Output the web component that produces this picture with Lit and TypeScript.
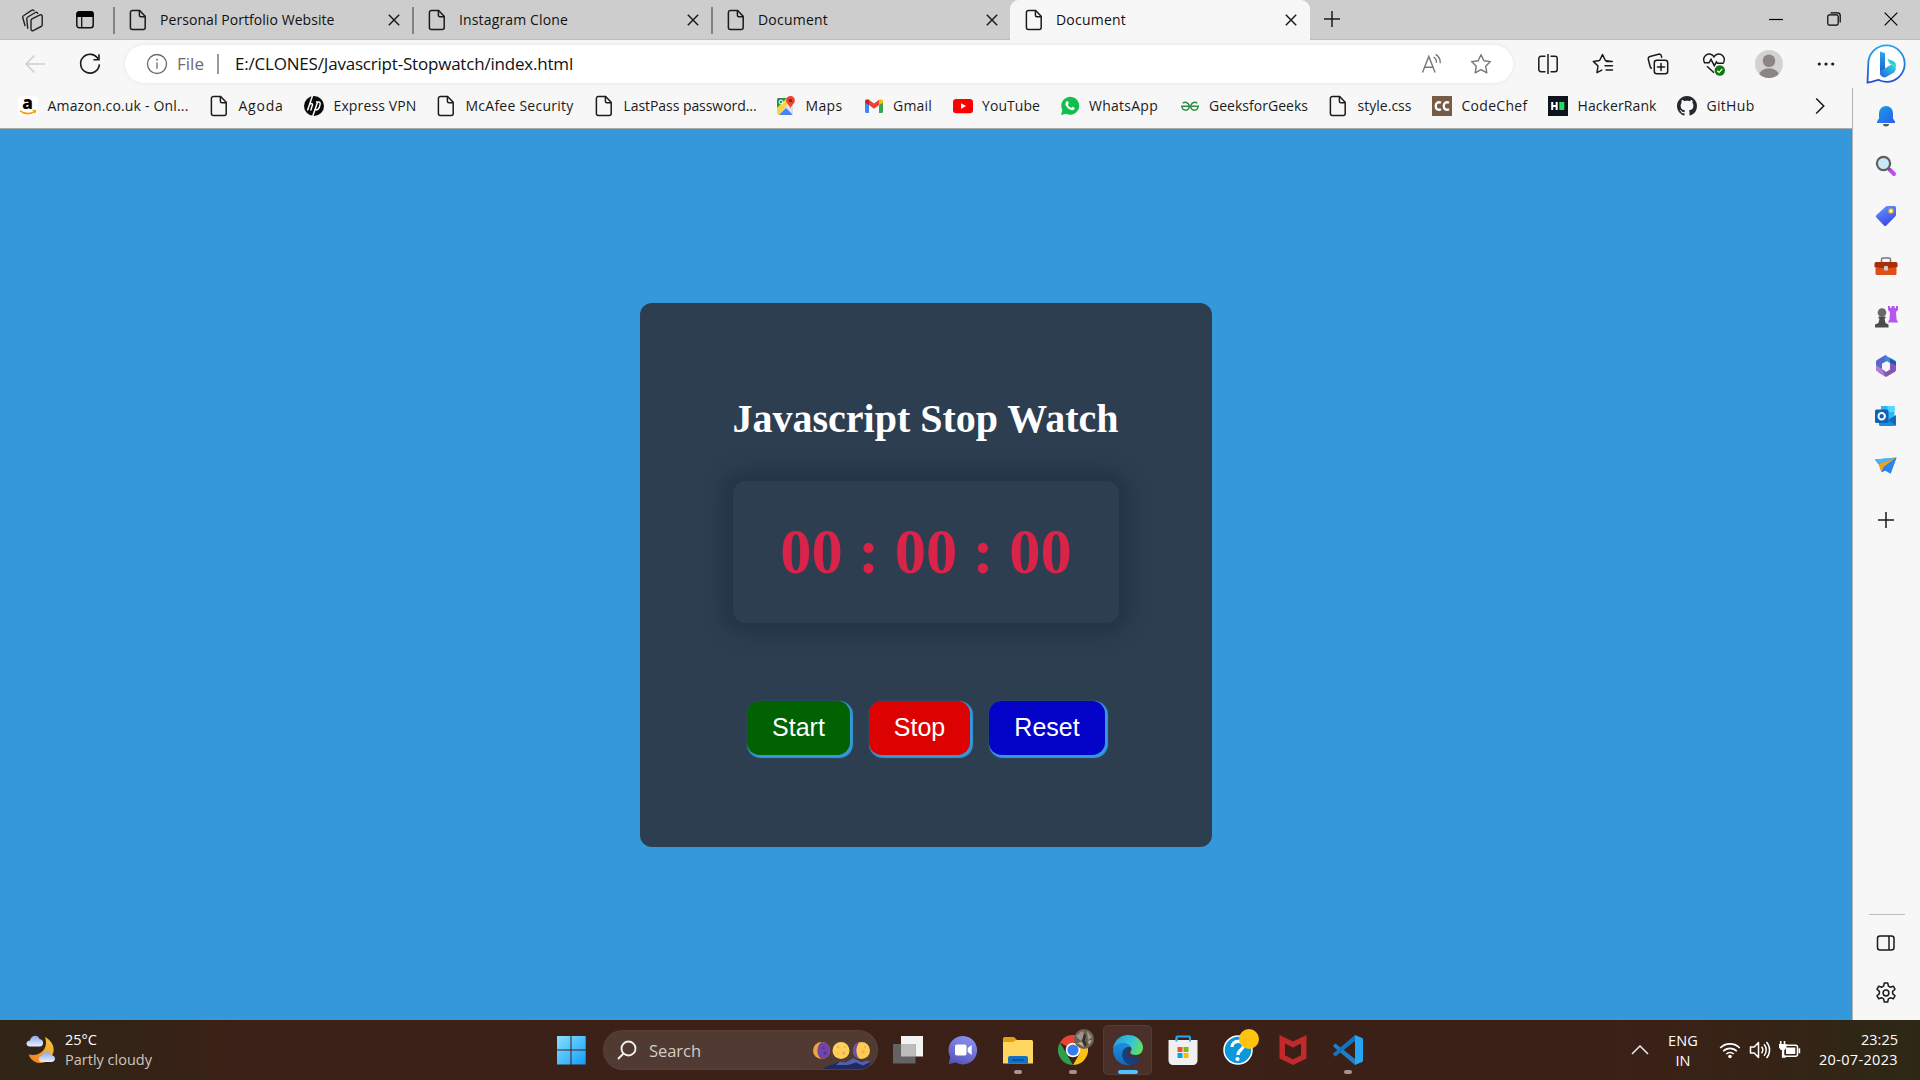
import { LitElement, html, css, TemplateResult } from "lit";
import { customElement } from "lit/decorators.js";

const UI_FONT = '"Open Sans", "Noto Sans", sans-serif';
const ctx = document.createElement("canvas").getContext("2d")!;

/** Letter spacing that makes a label fill the given width. */
function tracking(text: string, size: number, width: number): number {
  ctx.font = `${size}px ${UI_FONT}`;
  return (width - ctx.measureText(text).width) / text.length;
}

function label(text: string, size: number, width: number, cls = "") {
  return html`<span
    class="label ${cls}"
    style="font-size:${size}px;width:${width}px;letter-spacing:${tracking(text, size, width).toFixed(3)}px"
    >${text}</span
  >`;
}

const page = html`<svg width="18" height="22" viewBox="0 0 18 22" fill="none" stroke="#1b1b1b" stroke-width="1.5"><path d="M3.4 1.5h7.2l5.6 5.8v11.2a2 2 0 0 1-2 2H3.4a2 2 0 0 1-2-2v-15a2 2 0 0 1 2-2z"/><path d="M10.4 1.8v4.4a1.5 1.5 0 0 0 1.5 1.5h4"/></svg>`;
const cross = html`<svg width="14" height="14" viewBox="0 0 14 14" stroke="#1b1b1b" stroke-width="1.5"><path d="M1.8 1.8l10.4 10.4M12.2 1.8L1.8 12.2"/></svg>`;

const workspaces = html`<svg width="24" height="24" viewBox="0 0 24 24" fill="#cdcdcd" stroke="#222" stroke-width="1.4" stroke-linejoin="round" stroke-linecap="round"><path d="M4 17.500L1.800 9.800a2 2 0 0 1 1-2.300L10.600 2.300a1.800 1.800 0 0 1 2.400.3" fill="none"/><path d="M6.700 20.300L5.800 11a2 2 0 0 1 1-2l7.600-4.500a1.600 1.600 0 0 1 2.300.9" fill="none"/><path d="M10 12.600a2 2 0 0 1 1-1.700l8-4a1.500 1.500 0 0 1 2.200 1.300v8.500a2 2 0 0 1-1.100 1.800l-7.900 4.100a1.500 1.500 0 0 1-2.200-1.300z"/></svg>`;
const tabActions = html`<svg width="20" height="20" viewBox="0 0 20 20"><rect x="1.800" y="1.800" width="16.400" height="16" rx="2.500" fill="none" stroke="#111" stroke-width="1.500"/><path d="M1.500 7V4a2.800 2.800 0 0 1 2.800-2.800h11.400A2.800 2.800 0 0 1 18.500 4v3z" fill="#000"/><path d="M6.700 7v11" stroke="#111" stroke-width="1.300"/></svg>`;

const back = html`<svg width="22" height="20" viewBox="0 0 22 20" fill="none" stroke="#d0d0d0" stroke-width="1.500"><path d="M21 10H2M10.500 1.500L2 10l8.500 8.500"/></svg>`;
const reload = html`<svg width="24" height="24" viewBox="0 0 24 24" fill="none" stroke="#1b1b1b" stroke-width="1.600"><path d="M20.300 7.200A9.400 9.400 0 1 0 21.400 12.400"/><path d="M21 2.200v5.600h-5.600"/></svg>`;
const info = html`<svg width="22" height="22" viewBox="0 0 22 22" fill="none" stroke="#6b6b6b" stroke-width="1.300"><circle cx="11" cy="11" r="9.500"/><path d="M11 9.500v6.300"/><circle cx="11" cy="6.700" r=".6" fill="#6b6b6b" stroke-width=".8"/></svg>`;
const readAloud = html`<svg width="22" height="22" viewBox="0 0 22 22" fill="none" stroke="#767676" stroke-width="1.400"><path d="M1.500 19.500L7.800 3.500l6.300 16M3.600 14.200h8.400"/><path d="M12.600 4a6 6 0 0 1 2.800 5.600M14.600 1.300a9.500 9.500 0 0 1 4.600 8.800"/></svg>`;
const star = html`<svg width="22" height="22" viewBox="0 0 22 22" fill="none" stroke="#767676" stroke-width="1.400" stroke-linejoin="round"><path d="M11 1.700l2.900 6 6.500.9-4.700 4.600 1.100 6.600-5.800-3.100-5.800 3.100 1.100-6.600L1.600 8.600l6.500-.9z"/></svg>`;

const toolbarIcons: TemplateResult[] = [
  html`<svg width="22" height="22" viewBox="0 0 22 22" fill="none" stroke="#1b1b1b" stroke-width="1.500"><path d="M8.500 3.300H4a2.200 2.200 0 0 0-2.200 2.200v11A2.200 2.200 0 0 0 4 18.700h4.500M13.500 3.300H18a2.200 2.200 0 0 1 2.200 2.200v11a2.200 2.200 0 0 1-2.200 2.200h-4.500M11 1v20"/></svg>`,
  html`<svg width="22" height="22" viewBox="0 0 22 22" fill="none" stroke="#1b1b1b" stroke-width="1.500" stroke-linejoin="round" stroke-linecap="round"><path d="M19.500 8.400l-6.100-.9-2.900-5.900-2.900 5.900-6.300.9L6 13l-1 6.700 4.800-2.600M14.300 8.500h6M13 12.700h7.500M14 17h6.500"/></svg>`,
  html`<svg width="22" height="22" viewBox="0 0 22 22" fill="none" stroke="#1b1b1b" stroke-width="1.500" stroke-linecap="round"><rect x="7.300" y="7.300" width="13.400" height="13.400" rx="2.500"/><path d="M14 10.500v7M10.500 14h7M4.400 15.300A4 4 0 0 1 3 13L1.300 6.200a2.300 2.300 0 0 1 1.700-2.800l8.500-2.200a2.300 2.300 0 0 1 2.800 1.700l.4 1.300"/></svg>`,
  html`<svg width="24" height="24" viewBox="0 0 24 24" fill="none" stroke="#1b1b1b" stroke-width="1.500"><path d="M2.400 10.500a5.300 5.300 0 0 1 9.600-5.700 5.300 5.300 0 0 1 9.600 5.700M2 10.800h5l2-3.500 3.300 6.300 2.200-3.800 1 1.500h6.300M5 14.300l7 6.500"/><circle cx="17.800" cy="18.500" r="5.200" fill="#0e7a0d" stroke="none"/><path d="M15.300 18.700l1.800 1.700 3.200-3.600" stroke="#fff" stroke-width="1.200"/></svg>`,
  html`<svg width="28" height="28" viewBox="0 0 28 28"><defs><clipPath id="avatar-clip"><circle cx="14" cy="14" r="14"/></clipPath></defs><g clip-path="url(#avatar-clip)"><path d="M0 0h28v28H0z" fill="#d4d2d0"/><circle cx="14" cy="10.700" r="6.300" fill="#8b8683"/><ellipse cx="14" cy="25.500" rx="10" ry="7.200" fill="#8b8683"/></g></svg>`,
  html`<svg width="18" height="6" viewBox="0 0 18 6" fill="#1b1b1b"><circle cx="2.300" cy="3" r="1.600"/><circle cx="9" cy="3" r="1.600"/><circle cx="15.700" cy="3" r="1.600"/></svg>`,
];

const icoAmazon = html`<svg class="spill" width="20" height="20" viewBox="0 0 20 20"><rect width="20" height="20" rx="3" fill="#fff"/><text x="9.500" y="13" text-anchor="middle" font-family="Open Sans" font-weight="800" font-size="17" fill="#000">a</text><path d="M2 14.800c5 3.600 10.500 3.500 15 .6" fill="none" stroke="#f90" stroke-width="1.600"/><path d="M14.500 14.200l3.200.2-.8 3" fill="none" stroke="#f90" stroke-width="1.100"/></svg>`;
const icoHp = html`<svg width="20" height="20" viewBox="0 0 20 20"><circle cx="10" cy="10" r="10" fill="#0a0a0a"/><path d="M8.400 0L3.500 14.500M5 10c1-3.500 4.200-3 3.300-.4L6.700 14.500M13.600 6l-4.800 14M12 6h2.600c2.600 0 1.300 3.600.6 5.500s-1.200 2.500-3.600 2.500" fill="none" stroke="#fff" stroke-width="1.500"/></svg>`;
const icoMaps = html`<svg width="20" height="20" viewBox="0 0 20 20"><defs><clipPath id="map-clip"><rect x="1" y="2" width="16" height="17" rx="2"/></clipPath></defs><g clip-path="url(#map-clip)"><path d="M0 0h20v20H0z" fill="#dfe1e5"/><path d="M0 0h14L1 17z" fill="#1fa463"/><path d="M0 13L12 1l4 2L2 20z" fill="#fcd43c"/><path d="M2 20l8-8 8 8z" fill="#4285f4"/><path d="M0 0h10L1 11z" fill="#2b8e55"/></g><circle cx="5" cy="6" r="1.900" fill="none" stroke="#fff"/><path d="M14.500 0a4.400 4.400 0 0 1 4.400 4.500c0 3-3.600 4.500-4.400 8-.8-3.500-4.400-5-4.400-8A4.400 4.400 0 0 1 14.500 0z" fill="#ea4335"/><circle cx="14.500" cy="4.500" r="1.600" fill="#8e1a14"/></svg>`;
const icoGmail = html`<svg width="20" height="20" viewBox="0 0 20 20"><path d="M1 6v9.500A1.500 1.500 0 0 0 2.500 17H5V8z" fill="#4285f4"/><path d="M19 6v9.500a1.500 1.500 0 0 1-1.500 1.500H15V8z" fill="#34a853"/><path d="M1 5.500C1 3.300 3.500 2.500 5 3.700V9L1 6.800z" fill="#c5221f"/><path d="M19 5.500c0-2.200-2.500-3-4-1.800V9l4-2.200z" fill="#fbbc04"/><path d="M5 3.700l5 3.800 5-3.800V9l-5 3.800L5 9z" fill="#ea4335"/></svg>`;
const icoYoutube = html`<svg width="20" height="20" viewBox="0 0 20 20"><rect y="3" width="20" height="14.200" rx="3.200" fill="#f00"/><path d="M8 7.300v5.600l5-2.800z" fill="#fff"/></svg>`;
const icoWhatsapp = html`<svg width="20" height="20" viewBox="0 0 20 20"><path d="M1 19l1.400-4.800A9 9 0 1 1 6 17.700z" fill="#12bf4c"/><path d="M6.600 5.400c.5-.5 1.200-.4 1.400.1l.8 1.800-.9 1.400c.7 1.500 1.800 2.500 3.300 3.200l1.200-1.200 2 1c.5.300.3 1-.2 1.600-1 1-2.500 1.100-4.200.3a10 10 0 0 1-4.300-4.300c-.7-1.600-.3-3 .9-3.900z" fill="#fff"/></svg>`;
const icoGfg = html`<svg width="20" height="20" viewBox="0 0 20 20" fill="none" stroke="#2f8d46" stroke-width="1.500"><path d="M2.800 7.300c2-1.900 5.200-.9 6.200 1.700.9 2.500-.8 5.200-3.300 5.200-2 0-3.600-1.500-3.700-3.900M1 10.300h18M17.200 7.300c-2-1.900-5.200-.9-6.200 1.700-.9 2.500.8 5.200 3.300 5.200 2 0 3.600-1.500 3.700-3.900"/></svg>`;
const icoCodechef = html`<svg width="20" height="20" viewBox="0 0 20 20"><path d="M0 0h20v20H0z" fill="#775c47"/><path d="M9 6.800C6 5.300 3.700 7 3.700 10s2.300 4.700 5.300 3.200M17 6.800c-3-1.500-5.300.2-5.300 3.200s2.300 4.700 5.300 3.200" fill="none" stroke="#fff" stroke-width="2.300"/></svg>`;
const icoHacker = html`<svg width="20" height="20" viewBox="0 0 20 20"><path d="M0 0h20v20H0z" fill="#0e141e"/><path d="M4.200 6v8M8.700 6v8M4.200 10h4.500" stroke="#fff" stroke-width="2"/><path d="M11.300 6h5v8h-5z" fill="#1fe05b"/></svg>`;
const icoGithub = html`<svg width="20" height="20" viewBox="0 0 16 16" fill="#24292f"><path d="M8 0C3.580 0 0 3.580 0 8c0 3.540 2.290 6.530 5.470 7.590.4.070.55-.17.55-.38 0-.19-.01-.82-.01-1.490-2.010.37-2.530-.49-2.690-.94-.09-.23-.48-.94-.82-1.130-.28-.15-.68-.52-.01-.53.63-.01 1.080.58 1.230.82.72 1.210 1.870.87 2.330.66.070-.52.28-.87.51-1.070-1.780-.2-3.640-.89-3.640-3.950 0-.87.31-1.590.82-2.150-.08-.2-.36-1.020.08-2.120 0 0 .67-.21 2.200.82.64-.18 1.320-.27 2-.27s1.360.09 2 .27c1.530-1.040 2.200-.82 2.200-.82.44 1.100.16 1.920.08 2.120.51.56.82 1.270.82 2.150 0 3.070-1.870 3.750-3.650 3.950.29.25.54.73.54 1.480 0 1.070-.01 1.930-.01 2.200 0 .21.15.46.55.38A8.010 8.010 0 0 0 16 8c0-4.420-3.580-8-8-8z"/></svg>`;

interface Bookmark { icon: TemplateResult; text: string; width: number; slot: number }
const bookmarks: Bookmark[] = [
  { icon: icoAmazon, text: "Amazon.co.uk - Onl...", width: 141, slot: 191 },
  { icon: page, text: "Agoda", width: 45, slot: 95 },
  { icon: icoHp, text: "Express VPN", width: 83, slot: 132 },
  { icon: page, text: "McAfee Security", width: 108, slot: 158 },
  { icon: page, text: "LastPass password...", width: 133, slot: 182 },
  { icon: icoMaps, text: "Maps", width: 37, slot: 87.500 },
  { icon: icoGmail, text: "Gmail", width: 39, slot: 89 },
  { icon: icoYoutube, text: "YouTube", width: 58, slot: 107 },
  { icon: icoWhatsapp, text: "WhatsApp", width: 69, slot: 120 },
  { icon: icoGfg, text: "GeeksforGeeks", width: 99, slot: 148.500 },
  { icon: page, text: "style.css", width: 54, slot: 104 },
  { icon: icoCodechef, text: "CodeChef", width: 66, slot: 116 },
  { icon: icoHacker, text: "HackerRank", width: 79, slot: 129 },
  { icon: icoGithub, text: "GitHub", width: 48, slot: 100 },
];

const bing = html`<svg width="42" height="42" viewBox="0 0 42 42"><defs><linearGradient id="bing-ring" x1="0" y1="0" x2="0" y2="1"><stop offset="0" stop-color="#22a7ee"/><stop offset="1" stop-color="#2252cf"/></linearGradient><linearGradient id="bing-a" x1="0" y1="0" x2="0" y2="1"><stop offset="0" stop-color="#2aa9f0"/><stop offset="1" stop-color="#1a52cd"/></linearGradient><linearGradient id="bing-b" x1="0" y1="1" x2="1" y2="0"><stop offset="0" stop-color="#1d5fe0"/><stop offset="1" stop-color="#37dfe0"/></linearGradient></defs><path d="M2.500 39.700l.8-19.200A18.200 18.200 0 1 1 21.400 38.800c-3 0-5.600-.7-8-2-3 .9-6.500 2.200-10.900 2.900z" fill="#fff" stroke="url(#bing-ring)" stroke-width="1.800"/><path d="M15 8.500l5 1.800v15.900l-5 5.600z" fill="url(#bing-a)"/><path d="M15 28.500l12-7.500 3.500 2.800c1 3.200-.5 5-2.300 6.100l-7.200 4.200c-2.700 1.400-6-1-6-4z" fill="url(#bing-b)"/><path d="M22.300 15.800l6 2.300c2 .9 3.200 3.100 2.500 6.300-1-1.800-2.400-2.600-4.300-3.100l-2.200-1z" fill="#2bd0df"/></svg>`;

const sideIcons: TemplateResult[] = [
  html`<svg width="22" height="22" viewBox="0 0 22 22"><defs><linearGradient id="bell-fill" x1="0" y1="0" x2="1" y2="1"><stop stop-color="#10a4df"/><stop offset="1" stop-color="#3159f5"/></linearGradient></defs><path d="M8 19h6a3 2.500 0 0 1-6 0z" fill="#5b5b5b"/><path d="M11 1a7 7 0 0 1 7 7v5.500l2 3V18H2v-1.500l2-3V8a7 7 0 0 1 7-7z" fill="url(#bell-fill)"/></svg>`,
  html`<svg width="22" height="22" viewBox="0 0 22 22"><path d="M14.500 14.500l4.500 4.500" stroke="#c04df5" stroke-width="4" stroke-linecap="round"/><path d="M12.500 12.500l2.500 2.500" stroke="#6a6a6a" stroke-width="2.500"/><circle cx="8.500" cy="8.500" r="6.600" fill="#c8e7f8" stroke="#5f5f5f" stroke-width="2.200"/></svg>`,
  html`<svg width="22" height="22" viewBox="0 0 22 22"><defs><linearGradient id="tag-fill" x1="0" y1="0" x2=".5" y2="1"><stop stop-color="#5fa0ff"/><stop offset="1" stop-color="#4148e8"/></linearGradient></defs><path d="M12.300 1h7.200A1.700 1.700 0 0 1 21 2.700v7.100a2 2 0 0 1-.6 1.400l-9 9.200a1.700 1.700 0 0 1-2.400 0L1.300 12.600a1.700 1.700 0 0 1 0-2.400l9.500-8.600a2 2 0 0 1 1.500-.6z" fill="url(#tag-fill)"/><circle cx="16" cy="6" r="2" fill="#fff" stroke="#f3bd22" stroke-width="1.500"/></svg>`,
  html`<svg width="24" height="22" viewBox="0 0 24 22"><path d="M7.500 8V4.500A1.500 1.500 0 0 1 9 3h6a1.500 1.500 0 0 1 1.500 1.500V8" fill="none" stroke="#777" stroke-width="1.500"/><path d="M1.500 11h21v7.500a1.500 1.500 0 0 1-1.500 1.500H3a1.500 1.500 0 0 1-1.500-1.500z" fill="#dc501c"/><path d="M2 7h20a1.500 1.500 0 0 1 1.500 1.500V12q-11.500 2-23 0V8.500A1.500 1.500 0 0 1 2 7z" fill="#a82f09"/><rect x="10" y="11" width="4" height="4.500" rx="1" fill="#cfcfcf"/></svg>`,
  html`<svg width="24" height="24" viewBox="0 0 24 24"><path d="M14 2h2v2h1.500V2h3v2H22V2h2v4l-2 2 .5 7 1.500 3.500H14L15.500 15 16 8l-2-2z" fill="#b556f0"/><circle cx="8" cy="8.500" r="4.300" fill="#696969"/><path d="M4.500 12.500h7v2h-1l1 4.500 3 1.500V23.500H1V20.500L4.500 19l1-4.500h-1z" fill="#4c4c4c"/></svg>`,
  html`<svg width="22" height="24" viewBox="0 0 22 24"><path d="M9.500 1.500L2 6a2 2 0 0 0-1 1.800v8.500l6 3.200V10l7-4-2.500-4.500a2 2 0 0 0-2 0z" fill="#5867c9"/><path d="M10 1.300l9.800 5A2 2 0 0 1 21 8v8l-6-3V9l-5-3z" fill="#2e91db"/><path d="M21 11v5a2 2 0 0 1-1 1.800l-8 4.700a2 2 0 0 1-2 0L3 18l4-3 4 3 4-2.500V8z" fill="#8358b5"/><path d="M1 11v5.500L10 22l-3-7z" fill="#b37bdc"/><path d="M15 8.500l6 3V8l-6-3.500z" fill="#2452ad"/><path d="M11 7.500l4 2.300v4.500l-4 2.300-4-2.300V9.800z" fill="#f7f7f7"/></svg>`,
  html`<svg width="22" height="22" viewBox="0 0 22 22"><path d="M6 1h13.500v13H6z" fill="#30b6f0"/><path d="M12.500 1h7v6h-7z" fill="#53d8ff"/><path d="M4 12l9 3 8-5v9.500a1.500 1.500 0 0 1-1.500 1.500h-14A1.500 1.500 0 0 1 4 19.500z" fill="#1a8be0"/><path d="M20.900 10.500v10L13 15z" fill="#1767b4"/><rect y="4.500" width="13.500" height="13.500" rx="1.500" fill="#0f62b5"/><circle cx="6.700" cy="11.200" r="3.200" fill="none" stroke="#fff" stroke-width="2"/></svg>`,
  html`<svg width="24" height="22" viewBox="0 0 24 22"><path d="M.8 4.400L22.500 2.500 16.500 18.800l-5-3-4 1.500-2.500-7.500z" fill="#2388e8"/><path d="M.8 4.400L22.500 2.500 5.500 8.800z" fill="#4cb7f5"/><path d="M22.500 2.500L4.700 9l2.800 8.300 2-5z" fill="#f0a21c"/><path d="M22.500 2.500L9.600 12l7 6.600z" fill="#2b83ec"/></svg>`,
];
const plus = (c: string) => html`<svg width="18" height="18" viewBox="0 0 18 18" stroke=${c} stroke-width="1.500"><path d="M9 1v16M1 9h16"/></svg>`;
const panel = html`<svg width="20" height="18" viewBox="0 0 20 18" fill="none" stroke="#1b1b1b" stroke-width="1.500"><rect x="1.500" y="2" width="16.500" height="14" rx="2.500"/><path d="M13 2v14"/></svg>`;
const gear = html`<svg width="24" height="24" viewBox="0 0 24 24" fill="none" stroke="#1b1b1b" stroke-width="1.500" stroke-linejoin="round"><circle cx="12" cy="12" r="2.900"/><path d="M10.300 2h3.400l.7 3.200 1.800 1 3.100-1 1.700 3-2.400 2.200v2.200l2.400 2.200-1.700 3-3.100-1-1.800 1-.7 3.200h-3.400l-.7-3.200-1.800-1-3.100 1-1.700-3 2.400-2.200v-2.200L3 8.200l1.700-3 3.100 1 1.800-1z"/></svg>`;

const weather = html`<svg width="31" height="30" viewBox="0 0 31 30"><defs><linearGradient id="moon-fill" x1="1" y1="0" x2="0" y2="1"><stop stop-color="#f5c744"/><stop offset="1" stop-color="#ec7b1e"/></linearGradient><linearGradient id="cloud-fill" x1="0" y1="0" x2="0" y2="1"><stop stop-color="#8ba9ea"/><stop offset="1" stop-color="#e8efff"/></linearGradient></defs><path d="M19 3c6 3 9.500 9 8.500 14.500C26 25 20 29.500 13 29 8 28.500 4 25 2.700 20.500 9 22 15 20 18 15.500c2.500-3.700 2.500-8 1-12.500z" fill="url(#moon-fill)"/><path d="M4 12.500c-5 0-4.500-6 0-6C5 1 12 0 13.500 5c5 .5 4.500 7.500.3 7.500z" fill="url(#cloud-fill)"/><path d="M16 28c-4.500 0-4-6 0-6 1.500-5 7.500-5 9-1 5.500.5 5 7 .5 7z" fill="url(#cloud-fill)"/></svg>`;
const winLogo = html`<svg width="30" height="30" viewBox="0 0 30 30"><defs><linearGradient id="win-fill" gradientUnits="userSpaceOnUse" x1="0" y1="0" x2="30" y2="30"><stop stop-color="#8de3ff"/><stop offset="1" stop-color="#109cfa"/></linearGradient></defs><path d="M1 1h13.500v13.500H1zM15.500 1H29.700v13.500H15.500zM1 15.500h13.500v14H1zM15.500 15.500H29.700v14H15.500z" fill="url(#win-fill)"/></svg>`;
const mag = html`<svg width="20" height="20" viewBox="0 0 20 20" fill="none" stroke="#f2efee" stroke-width="1.900" stroke-linecap="round"><circle cx="11.500" cy="8.500" r="7"/><path d="M6.300 13.800L1.500 18.500"/></svg>`;
const moons = html`<svg width="60" height="30" viewBox="0 0 60 30"><circle cx="9.500" cy="10.500" r="8.500" fill="#eba640"/><path d="M9.500 2a8.500 8.500 0 0 1 0 17C4 15.500 4 6 9.500 2z" fill="#7145a8"/><circle cx="29" cy="10.500" r="8.500" fill="#ffcf5b"/><circle cx="49.500" cy="10.500" r="8.500" fill="#ffcb57"/><path d="M47.500 2.200A8.500 8.500 0 0 0 47 18.700C43.500 13 43.500 7 47.500 2.200z" fill="#724da5"/><g fill="#f0b04a"><circle cx="26" cy="7" r="1.300"/><circle cx="32" cy="13" r="1.700"/><circle cx="33" cy="7" r="1"/><circle cx="25.500" cy="13.500" r="1"/><circle cx="51" cy="12" r="1.700"/><circle cx="53" cy="7" r="1.100"/></g><g fill="#5b338f"><circle cx="11.500" cy="8" r="1.300"/><circle cx="13" cy="13" r="1.400"/></g><path d="M10.500 29q5-4 10-4.500l8-3 5 1 9-4.500 7 3.500 5-1 4.500 2q-2.500 6.500-11 6.500z" fill="#1d2a63"/><path d="M24 25l4-3.500 5.500 1 8-4.500 8 4 5-1.500 4.500 1-8 4-7-3-8 2.500z" fill="#5360ab"/></svg>`;

interface App { icon: TemplateResult; state: "" | "open" | "active" }
const apps: App[] = [
  { state: "", icon: html`<svg width="30" height="30" viewBox="0 0 30 30"><path d="M8 1h22v20.500H8z" fill="#f3f3f3"/><path d="M0 9h22.500v19.500H0z" fill="#636363"/><path d="M8 9h14.500v12.500H8z" fill="#bcbcbc"/></svg>` },
  { state: "", icon: html`<svg width="30" height="30" viewBox="0 0 30 30"><defs><linearGradient id="chat-fill" x1=".7" y1="0" x2=".3" y2="1"><stop stop-color="#8c91f0"/><stop offset="1" stop-color="#5556bd"/></linearGradient></defs><path d="M15 1a14.200 14.200 0 1 1-7 26.600L.8 29l1.400-7A14.200 14.200 0 0 1 15 1z" fill="url(#chat-fill)"/><rect x="7" y="9.500" width="11.500" height="11" rx="1.800" fill="#fff"/><path d="M19.700 13l4-3v10l-4-3z" fill="#fff"/></svg>` },
  { state: "open", icon: html`<svg width="30" height="30" viewBox="0 0 30 30"><path d="M0 5V3.500A1.500 1.500 0 0 1 1.500 2h9.500L14 5v5H0z" fill="#e0a010"/><path d="M0 7h10l3-2h15.500A1.500 1.500 0 0 1 30 6.500V28.500H0z" fill="#ffd660"/><path d="M5 28.500V23a2 2 0 0 1 2-2h16a2 2 0 0 1 2 2v5.500z" fill="#1271c4"/><path d="M9 25h12" stroke="#0b4782" stroke-width="1.300"/></svg>` },
  { state: "open", icon: html`<svg width="30" height="30" viewBox="0 0 30 30"><path d="M15 15L2 7.500A15 15 0 0 1 28 7.500H15z" fill="#ea4335"/><path d="M2 7.500L8.500 18.800 15 30A15 15 0 0 1 2 7.500z" fill="#2f9e4d"/><path d="M28 7.500A15 15 0 0 1 15 30l6.500-11.200L22 7.500z" fill="#fbc116"/><circle cx="15" cy="15" r="7.300" fill="#fff"/><circle cx="15" cy="15" r="5.600" fill="#3a7cec"/></svg><svg class="badge" width="20" height="20" viewBox="0 0 20 20"><circle cx="10" cy="10" r="10" fill="#6b6157"/><path d="M2 7l6-5 4 4-5 6zM13 2l5 6-4 3z" fill="#9f968a"/><path d="M10 4l2 2-1 6 2 3-2 3-3-6z" fill="#342e28"/><path d="M3 14l5-1 2 5zM14 12l4-1-3 5z" fill="#c0b09a"/></svg>` },
  { state: "active", icon: html`<svg width="30" height="30" viewBox="0 0 30 30"><defs><linearGradient id="edge-top" x1="0" y1=".2" x2="1" y2=".5"><stop stop-color="#249be0"/><stop offset=".6" stop-color="#36c4d7"/><stop offset="1" stop-color="#62df62"/></linearGradient><linearGradient id="edge-low" x1="0" y1="0" x2="0" y2="1"><stop stop-color="#1d8ed9"/><stop offset="1" stop-color="#1268bd"/></linearGradient></defs><path d="M0 14C.8 6 7 0 15 0c9 0 15 6.500 15 12.500 0 5-3.500 7.500-7.500 7.500-5 0-5.800-2-4.800-3.400 1-1.300 1-2.600.3-4C16.500 9.500 13 8.500 10 8.500 5 8.500 1.500 11 0 14z" fill="url(#edge-top)"/><path d="M0 14.500C1 10.500 5.500 8 10 8c4.500 0 7.500 2.500 8.200 4.500-4-2-8.700 1.500-8.700 7 0 5.500 4.500 9.500 8.500 10.200C8 31.500 0 25 0 14.500z" fill="url(#edge-low)"/><path d="M18 12.500c-4.800-1.500-8.800 2-8.800 7C9.200 25.500 14 30 18 29.700c4-.5 7.800-3.200 9.800-6.700.3-.8-.4-1.200-1-.8-4 2-8.800 1-11-2.200-1.900-2.800-.3-6 2.200-7.500z" fill="#173f80"/></svg>` },
  { state: "", icon: html`<svg width="30" height="30" viewBox="0 0 30 30"><path d="M8.500 7V2A1 1 0 0 1 9.500 1.500h11.500a1 1 0 0 1 1 1V7" fill="none" stroke="#27a9ed" stroke-width="2"/><path d="M.5 5h29v20.500a4.500 4.500 0 0 1-4.500 4.500H5A4.500 4.500 0 0 1 .5 25.500z" fill="#f0f0f0"/><path d="M8.500 6.500V3M22 6.500V3" stroke="#27a9ed" stroke-width="2"/><path d="M9.500 12h5v5h-5z" fill="#f25022"/><path d="M15.500 12h5v5h-5z" fill="#7fba00"/><path d="M9.500 18h5v5h-5z" fill="#00a4ef"/><path d="M15.500 18h5v5h-5z" fill="#ffb900"/></svg>` },
  { state: "", icon: html`<svg width="30" height="30" viewBox="0 0 30 30"><circle cx="15" cy="15" r="14" fill="#0b98dc" stroke="#fff" stroke-width="1.500"/><path d="M9 12c0-7 11.500-7.500 11.500-1.500 0 4.500-5.500 4-5.500 9.500" fill="none" stroke="#fff" stroke-width="3.200"/><circle cx="14.500" cy="24" r="2.100" fill="#fff"/></svg><svg class="badge" width="20" height="20" viewBox="0 0 20 20"><circle cx="10" cy="10" r="10" fill="#ffc20e"/></svg>` },
  { state: "", icon: html`<svg width="30" height="30" viewBox="0 0 30 30"><path d="M1.500 0L15 6.500 28.500 0v23.500L15 30 1.500 23.500z" fill="#c12a2b"/><path d="M7 8.500l8 4 8-4v11.700l-8 4-8-4z" fill="#3a1f17"/></svg>` },
  { state: "open", icon: html`<svg width="30" height="30" viewBox="0 0 30 30"><path d="M2.500 8.500L22 24v6L.5 11.800a1.300 1.300 0 0 1 0-1.800z" fill="#1b80cb"/><path d="M2.500 21.500L22 6V0L.5 18.200a1.300 1.300 0 0 0 0 1.800z" fill="#1175bd"/><path d="M22 0l7 3a1.700 1.700 0 0 1 1 1.500v21a1.700 1.700 0 0 1-1 1.500l-7 3z" fill="#27a5f2"/></svg>` },
];

const chevronUp = html`<svg width="18" height="10" viewBox="0 0 18 10" fill="none" stroke="#f1edeb" stroke-width="1.500"><path d="M1 9l8-8 8 8"/></svg>`;
const wifi = html`<svg width="22" height="18" viewBox="0 0 22 18" fill="none" stroke="#fff" stroke-width="1.600"><path d="M1.200 7a13.700 13.700 0 0 1 19.600 0M4.200 10.200a9.500 9.500 0 0 1 13.600 0M7.300 13a5.300 5.300 0 0 1 7.400 0"/><circle cx="11" cy="15.500" r="1.800" fill="#fff" stroke="none"/></svg>`;
const volume = html`<svg width="22" height="20" viewBox="0 0 22 20" fill="none" stroke="#fff" stroke-width="1.500" stroke-linejoin="round"><path d="M1.500 7h3.700L9.500 2.500v15L5.200 13H1.500z"/><path d="M12.500 6.800a5 5 0 0 1 0 6.400M15 4.300a8.500 8.500 0 0 1 0 11.400M17.500 2a12 12 0 0 1 0 16"/></svg>`;
const battery = html`<svg width="22" height="18" viewBox="0 0 22 18"><rect x="4.500" y="4.200" width="14" height="11" rx="2" fill="none" stroke="#fff" stroke-width="1.500"/><path d="M7 6.500h9.300V13H7z" fill="#fff"/><path d="M19.500 7.300h1.700v5h-1.700z" fill="#fff"/><path d="M0 3h7.500v3.500L5.700 9H1.800L0 6.500z" fill="#fff"/><path d="M1.700 0v4M5.500 0v4M3.700 8v8h3" stroke="#fff" stroke-width="1.600" fill="none"/></svg>`;

@customElement("app-root")
export class AppRoot extends LitElement {
  static styles = css`
    :host { display: flex; flex-direction: column; width: 1920px; height: 1080px; overflow: hidden; background: #f7f7f7; font-family: "Open Sans", "Noto Sans", sans-serif; color: #1b1b1b; }
    * { box-sizing: border-box; }
    svg { display: block; flex: none; }
    .spill { overflow: visible; }
    .label { display: block; white-space: nowrap; line-height: 20px; flex: none; }
    .center { display: flex; align-items: center; justify-content: center; flex: none; }

    .tabs { height: 40px; display: flex; flex: none; background: #cdcdcd; box-shadow: inset 0 -1px #bdbdbd; }
    .tab-tools { width: 113px; display: flex; align-items: center; gap: 30px; padding: 1px 0 2px 21px; flex: none; }
    .tab { width: 299px; display: flex; align-items: center; padding: 0 11px 0 14px; flex: none; }
    .tab.lined { border-image: linear-gradient(#0000 8px, #838383 8px, #838383 33px, #0000 33px) 1; border-width: 0 0 0 2px; border-style: solid; }
    .tab .label { margin-left: 13px; color: #111; }
    .tab svg:last-child { margin-left: auto; }
    .tab.active { width: 300px; background: #f7f7f7; border-radius: 9px 9px 0 0; padding: 0 12px 0 15px; }
    .tab.active .label { margin-left: 13px; }
    .new-tab { width: 43px; padding-bottom: 2px; }
    .window-buttons { margin-left: auto; display: flex; padding-bottom: 2px; }
    .window-buttons .center { width: 57.500px; }

    .body { flex: 1; display: flex; min-height: 0; }
    .main { width: 1852px; display: flex; flex-direction: column; flex: none; }
    .toolbar { height: 48px; display: flex; align-items: center; flex: none; width: 1860px; }
    .nav { width: 55px; }
    .nav.first { width: 69px; margin-right: -7px; }
    .address { width: 1388px; height: 38px; margin: 0 7px 0 8px; border-radius: 19px; background: #fff; box-shadow: 0 0 4px #00000014; display: flex; align-items: center; padding: 0 21px; flex: none; }
    .address .file { margin-left: 9px; color: #6b6b6b; }
    .address .url { margin-left: 16px; color: #111; }
    .rule { width: 2px; height: 20px; margin-left: 13px; background: #9b9b9b; }
    .address .read { margin-left: auto; margin-right: 27px; }
    .tool { width: 55.400px; }
    .tool:last-child { width: 59px; }
    .bookmarks { height: 41px; border-bottom: 1px solid #ababab; display: flex; align-items: center; padding: 0 0 4px 18px; flex: none; }
    .bookmark { display: flex; align-items: center; gap: 9.500px; flex: none; }
    .bookmark .center { width: 20px; }
    .more { margin-left: 38px; }

    .page { flex: 1; background: #3498db; display: flex; align-items: center; justify-content: center; padding-top: 1px; }
    .card { width: 572px; height: 544px; border-radius: 12px; background: #2c3e50; display: flex; flex-direction: column; align-items: center; padding-top: 93px; font-family: "Liberation Serif", serif; font-weight: 700; }
    .title { margin: 0 1px 0 0; font-size: 40px; line-height: 46px; color: #fff; white-space: nowrap; }
    .time { width: 386px; height: 142px; margin-top: 39px; border-radius: 12.500px; background: #2c3e50; box-shadow: 0 0 18px 10px #213547; color: #d92349; font-size: 62.500px; line-height: 72px; padding-top: 35px; text-align: center; white-space: nowrap; }
    .buttons { display: flex; gap: 19px; margin-top: 78px; }
    .btn { border: 0; margin: 0; height: 54px; padding: 0 0 1px; border-radius: 12.500px; color: #fff; font: 25px "Liberation Sans", sans-serif; box-shadow: 1.500px 1.500px 1px 1.500px #3498db; }
    .start { width: 103px; background: #006200; }
    .stop { width: 101px; background: #dc0202; }
    .reset { width: 116px; background: #0404c9; }

    .side { width: 68px; display: flex; flex-direction: column; }
    .bing { height: 48px; }
    .side-list { flex: 1; border-left: 1px solid #b4b4b4; display: flex; flex-direction: column; padding: 2.500px 0 2px; }
    .side-cell { height: 50px; padding-right: 1.500px; }
    .side-cell.add { height: 58px; }
    .side-rule { width: 36px; height: 1px; margin: auto auto 3px 16px; background: #bcbcbc; }

    .taskbar { height: 60px; flex: none; display: grid; grid-template-columns: 543px 840px 1fr; background: linear-gradient(90deg, #302517 0, #332316 120px, #3b2117 240px, #3b2017 1600px, #382216 1720px, #2d2816 1920px); color: #fff; }
    .weather { display: flex; gap: 8px; align-items: center; padding: 0 0 2px 26px; }
    .weather .muted { color: #cfc6bf; }
    .weather .stack { padding: 2px 0 0; }
    .apps { display: flex; align-items: center; }
    .app { width: 55px; height: 60px; position: relative; }
    .app::after { content: ""; position: absolute; top: 50px; height: 4px; border-radius: 2px; }
    .app.open::after { width: 8px; background: #a2938d; }
    .app.active::after { width: 20px; background: #4cc2ff; }
    .app.active { width: 49px; height: 50px; margin: 0 3px; border-radius: 5px; background: #4a3028; box-shadow: inset 0 0 0 1px #543c33; }
    .app.active::after { top: 45px; }
    .badge { position: absolute; left: 28.500px; top: 9px; }
    .search { width: 275px; height: 40px; margin: 0 2px 0 5px; border-radius: 20px; background: #503a31; box-shadow: inset 0 0 0 1px #573f36; display: flex; align-items: center; padding: 0 6px 0 14px; }
    .search .label { margin-left: 12px; padding-top: 1px; color: #d5ccc7; }
    .search svg:last-child { margin-left: auto; align-self: flex-end; }
    .tray { display: flex; align-items: center; justify-content: flex-end; padding-right: 22px; }
    .tray-icon { width: 30px; }
    .caret { width: 40px; }
    .stack { display: flex; flex-direction: column; padding-top: 1px; }
    .lang { width: 46px; align-items: center; margin-right: 9px; }
    .clock { width: 93px; align-items: flex-end; padding: 0; }
  `;

  private tab(text: string, width: number, cls: string) {
    return html`<div class="tab ${cls}">${page}${label(text, 14, width)}${cross}</div>`;
  }

  render() {
    return html`
      <div class="tabs">
        <div class="tab-tools">${workspaces}${tabActions}</div>
        ${this.tab("Personal Portfolio Website", 174.500, "lined")}
        ${this.tab("Instagram Clone", 109, "lined")}
        ${this.tab("Document", 70, "lined")}
        ${this.tab("Document", 70, "active")}
        <div class="new-tab center">${plus("#1b1b1b")}</div>
        <div class="window-buttons">
          <div class="center"><svg width="14" height="14" viewBox="0 0 14 14"><path d="M0 7.500h14" stroke="#000" stroke-width="1.200"/></svg></div>
          <div class="center"><svg width="14" height="14" viewBox="0 0 14 14" fill="none" stroke="#000" stroke-width="1.200"><rect x=".8" y="2.800" width="10.400" height="10.400" rx="1.600"/><path d="M3.500 .8h7a2.700 2.700 0 0 1 2.700 2.700v7"/></svg></div>
          <div class="center"><svg width="14" height="14" viewBox="0 0 14 14" stroke="#000" stroke-width="1.200"><path d="M.7.7l12.600 12.600M13.300.7L.7 13.300"/></svg></div>
        </div>
      </div>
      <div class="body">
        <div class="main">
          <div class="toolbar">
            <div class="nav first center">${back}</div>
            <div class="nav center">${reload}</div>
            <div class="address">
              ${info}${label("File", 17, 27, "file")}<span class="rule"></span>
              ${label("E:/CLONES/Javascript-Stopwatch/index.html", 17, 338, "url")}
              <span class="read">${readAloud}</span>${star}
            </div>
            ${toolbarIcons.map((i) => html`<div class="tool center">${i}</div>`)}
          </div>
          <div class="bookmarks">
            ${bookmarks.map(
              (b) => html`<div class="bookmark" style="width:${b.slot}px"><span class="center">${b.icon}</span>${label(b.text, 14, b.width)}</div>`
            )}
            <svg class="more" width="10" height="18" viewBox="0 0 10 18" fill="none" stroke="#1b1b1b" stroke-width="1.600"><path d="M1.200 1.500L8.700 9l-7.500 7.500"/></svg>
          </div>
          <div class="page">
            <div class="card">
              <h1 class="title">Javascript Stop Watch</h1>
              <div class="time">00 : 00 : 00</div>
              <div class="buttons">
                <button class="btn start">Start</button>
                <button class="btn stop">Stop</button>
                <button class="btn reset">Reset</button>
              </div>
            </div>
          </div>
        </div>
        <div class="side">
          <div class="bing center">${bing}</div>
          <div class="side-list">
            ${sideIcons.map((i) => html`<div class="side-cell center">${i}</div>`)}
            <div class="side-cell add center">${plus("#1b1b1b")}</div>
            <div class="side-rule"></div>
            <div class="side-cell center">${panel}</div>
            <div class="side-cell center">${gear}</div>
          </div>
        </div>
      </div>
      <div class="taskbar">
        <div class="weather">
          ${weather}
          <div class="stack">${label("25°C", 14.500, 32)}${label("Partly cloudy", 14.500, 87, "muted")}</div>
        </div>
        <div class="apps">
          <div class="app center">${winLogo}</div>
          <div class="search">${mag}${label("Search", 16.500, 52)}${moons}</div>
          ${apps.map((a) => html`<div class="app center ${a.state}">${a.icon}</div>`)}
        </div>
        <div class="tray">
          <div class="caret center">${chevronUp}</div>
          <div class="stack lang">${label("ENG", 14.500, 30)}${label("IN", 14.500, 15)}</div>
          <div class="tray-icon center">${wifi}</div>
          <div class="tray-icon center">${volume}</div>
          <div class="tray-icon center">${battery}</div>
          <div class="stack clock">${label("23:25", 14.500, 37)}${label("20-07-2023", 14.500, 79)}</div>
        </div>
      </div>
    `;
  }
}
